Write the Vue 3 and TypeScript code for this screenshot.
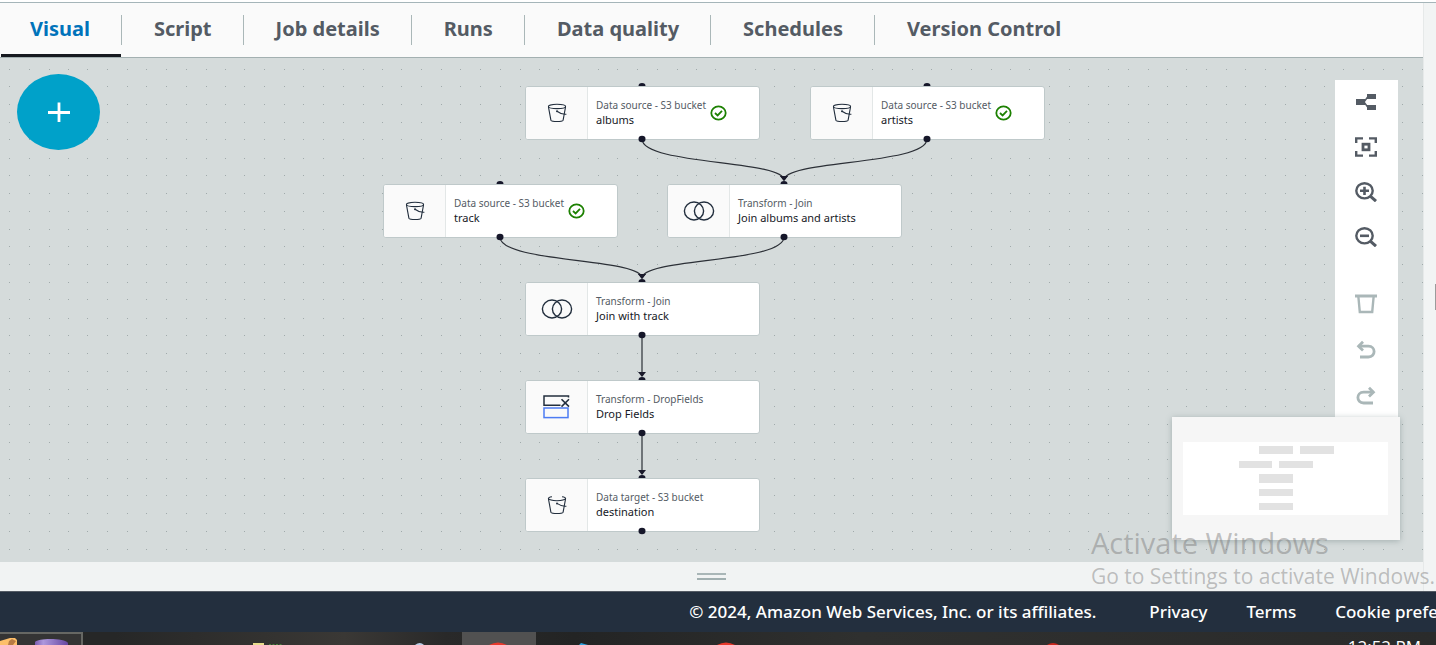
<script setup lang="ts">
import { ref } from 'vue'

type IconName = 'bucket' | 'bucketOpen' | 'join' | 'drop'

interface FlowNode {
  id: string
  kind: string
  name: string
  icon: IconName
  x: number
  y: number
  ok?: boolean
}

const tabs = ['Visual', 'Script', 'Job details', 'Runs', 'Data quality', 'Schedules', 'Version Control']
const active = ref('Visual')

const nodes: FlowNode[] = [
  { id: 'albums', kind: 'Data source - S3 bucket', name: 'albums', icon: 'bucket', x: 525, y: 28, ok: true },
  { id: 'artists', kind: 'Data source - S3 bucket', name: 'artists', icon: 'bucket', x: 810, y: 28, ok: true },
  { id: 'track', kind: 'Data source - S3 bucket', name: 'track', icon: 'bucket', x: 383, y: 126, ok: true },
  { id: 'join1', kind: 'Transform - Join', name: 'Join albums and artists', icon: 'join', x: 667, y: 126 },
  { id: 'join2', kind: 'Transform - Join', name: 'Join with track', icon: 'join', x: 525, y: 224 },
  { id: 'drop', kind: 'Transform - DropFields', name: 'Drop Fields', icon: 'drop', x: 525, y: 322 },
  { id: 'dest', kind: 'Data target - S3 bucket', name: 'destination', icon: 'bucketOpen', x: 525, y: 420 },
]

const links: [string, string][] = [
  ['albums', 'join1'],
  ['artists', 'join1'],
  ['track', 'join2'],
  ['join1', 'join2'],
  ['join2', 'drop'],
  ['drop', 'dest'],
]

const HALF = 117
const CARD_H = 53

const byId = (id: string) => nodes.find((n) => n.id === id)!

const edges = links.map(([from, to]) => {
  const a = byId(from)
  const b = byId(to)
  const x1 = a.x + HALF
  const y1 = a.y + CARD_H
  const x2 = b.x + HALF
  const y2 = b.y - 4
  return {
    key: from + to,
    d: `M${x1} ${y1} C${x1} ${y1 + 26} ${x2} ${y2 - 20} ${x2} ${y2}`,
    head: `${x2 - 4},${y2 - 4} ${x2 + 4},${y2 - 4} ${x2},${y2 + 1}`,
  }
})

const dotXs = [0, 20, 40, 59, 78, 98, 118, 137]
const dotYs = [0, 17, 35, 53, 70, 89, 106, 124, 142]

const blocks = [
  [76, 4, 34, 8],
  [117, 4, 34, 8],
  [56, 19, 33, 7],
  [96, 19, 34, 7],
  [76, 32, 34, 9],
  [76, 47, 34, 7],
  [76, 61, 34, 7],
]
</script>

<template>
  <div class="page">
    <div class="editor">
      <main class="workspace">
        <nav class="tabs" role="tablist">
          <button
            v-for="t in tabs"
            :key="t"
            class="tab"
            :class="{ active: active === t }"
            role="tab"
            :aria-selected="active === t"
            @click="active = t"
          >
            <span>{{ t }}</span>
          </button>
        </nav>

        <section class="canvas">
          <svg class="layer" width="100%" height="100%" aria-hidden="true">
            <defs>
              <pattern id="grid" x="9" y="11" width="157" height="160" patternUnits="userSpaceOnUse">
                <template v-for="y in dotYs" :key="y">
                  <rect v-for="x in dotXs" :key="x" :x="x" :y="y" width="1" height="1" fill="#a0aaab" />
                </template>
              </pattern>
            </defs>
            <rect width="100%" height="100%" fill="url(#grid)" />
            <g v-for="e in edges" :key="e.key">
              <path :d="e.d" fill="none" stroke="#2b2f36" stroke-width="1.2" />
              <polygon :points="e.head" fill="#1a1a2b" />
            </g>
            <ellipse v-for="n in nodes" :key="n.id" :cx="n.x + HALF" :cy="n.y" rx="3.5" ry="3" fill="#16172a" />
          </svg>

          <article
            v-for="n in nodes"
            :key="n.id"
            class="node"
            :style="{ left: n.x + 'px', top: n.y + 'px' }"
          >
            <div class="node-icon">
              <svg v-if="n.icon === 'bucket'" width="20" height="20" viewBox="0 0 20 20">
                <g fill="none" stroke="#232f3e" stroke-width="1.1">
                  <ellipse cx="10" cy="3.4" rx="8.6" ry="2.2" />
                  <path d="M1.4 3.6 L3.9 17.2 C5 19 15 19 16.1 17.2 L18.6 3.6" />
                  <path d="M10 8.2 C13 10.4 17 11.6 19.4 11.2" />
                </g>
                <circle cx="10" cy="8.2" r="1" fill="#232f3e" />
              </svg>
              <svg v-else-if="n.icon === 'bucketOpen'" width="20" height="20" viewBox="0 0 20 20">
                <g fill="none" stroke="#232f3e" stroke-width="1.1">
                  <path d="M5 1.8 C2 2.2 1.2 3 1.4 3.6 C2.8 6.4 17.2 6.4 18.6 3.6 C18.8 3 18 2.2 15 1.8" />
                  <path d="M1.4 3.6 L3.9 17.2 C5 19 15 19 16.1 17.2 L18.6 3.6" />
                  <path d="M10 8.4 C13 10.4 17 11.6 19.4 11.2" />
                </g>
                <circle cx="10" cy="8.4" r="1" fill="#232f3e" />
              </svg>
              <svg v-else-if="n.icon === 'join'" width="32" height="20" viewBox="0 0 32 20">
                <g fill="none" stroke="#232f3e" stroke-width="1.4">
                  <ellipse cx="11" cy="10" rx="9.6" ry="9" />
                  <ellipse cx="21" cy="10" rx="9.6" ry="9" />
                </g>
              </svg>
              <svg v-else width="28" height="24" viewBox="0 0 28 24">
                <path d="M25.5 2.5 V1 H1 V10.2 H17.5" fill="none" stroke="#232f3e" stroke-width="1.5" />
                <path d="M18.5 4.2 L26 11.6 M26 4.2 L18.5 11.6" stroke="#232f3e" stroke-width="1.6" />
                <rect x="1" y="13" width="24" height="9.6" fill="none" stroke="#4d7cf3" stroke-width="1.5" />
              </svg>
            </div>
            <div class="node-text">
              <span class="kind">{{ n.kind }}</span>
              <span class="name">{{ n.name }}</span>
            </div>
            <svg v-if="n.ok" class="ok" width="17" height="16" viewBox="0 0 17 16">
              <ellipse cx="8.5" cy="8" rx="7.2" ry="6.6" fill="none" stroke="#1d8102" stroke-width="1.8" />
              <path d="M5 8 L7.6 10.4 L12 5.8" fill="none" stroke="#1d8102" stroke-width="1.8" />
            </svg>
          </article>

          <svg class="layer over" width="100%" height="100%" aria-hidden="true">
            <ellipse v-for="n in nodes" :key="n.id" :cx="n.x + HALF" :cy="n.y + CARD_H" rx="3.5" ry="3.2" fill="#16172a" />
          </svg>

          <button class="add" aria-label="Add node">
            <svg width="22" height="20" viewBox="0 0 22 20">
              <path d="M0 10.5 H22 M11 0.5 V20" stroke="#fff" stroke-width="2.8" />
            </svg>
          </button>

          <div class="toolbar">
            <div class="group view">
              <button aria-label="Auto layout">
                <svg width="22" height="20" viewBox="0 0 22 20">
                  <g fill="#545b64">
                    <rect x="1" y="7" width="9" height="6" />
                    <rect x="12" y="2" width="9" height="5" />
                    <rect x="12" y="13" width="9" height="5" />
                  </g>
                  <path d="M13 4.5 L9 10 L13 15.5" fill="none" stroke="#545b64" stroke-width="1.4" />
                </svg>
              </button>
              <button aria-label="Fit to screen">
                <svg width="22" height="20" viewBox="0 0 22 20">
                  <g fill="none" stroke="#545b64">
                    <path d="M1.2 6 V1.4 H8 M14 1.4 H20.8 V6 M20.8 14 V18.6 H14 M8 18.6 H1.2 V14" stroke-width="2.4" />
                    <rect x="8" y="7.2" width="6" height="5.6" stroke-width="2.8" />
                  </g>
                </svg>
              </button>
              <button aria-label="Zoom in">
                <svg width="22" height="20" viewBox="0 0 22 20">
                  <g fill="none" stroke="#545b64">
                    <ellipse cx="9.5" cy="8.8" rx="8.2" ry="7.6" stroke-width="2.4" />
                    <path d="M15 13.8 L21 19.2" stroke-width="3" />
                    <path d="M5 8.8 H14 M9.5 4.7 V12.9" stroke-width="2.6" />
                  </g>
                </svg>
              </button>
              <button aria-label="Zoom out">
                <svg width="22" height="20" viewBox="0 0 22 20">
                  <g fill="none" stroke="#545b64">
                    <ellipse cx="9.5" cy="8.8" rx="8.2" ry="7.6" stroke-width="2.4" />
                    <path d="M15 13.8 L21 19.2" stroke-width="3" />
                    <path d="M5 8.8 H14" stroke-width="2.6" />
                  </g>
                </svg>
              </button>
            </div>
            <div class="group edit">
              <button aria-label="Remove" disabled>
                <svg width="22" height="20" viewBox="0 0 22 20">
                  <g fill="none" stroke="#aab7b8">
                    <path d="M0 2 H22" stroke-width="3" />
                    <path d="M3.4 3 L4.8 18 H17.2 L18.6 3" stroke-width="2.4" />
                  </g>
                </svg>
              </button>
              <button aria-label="Undo" disabled>
                <svg width="22" height="20" viewBox="0 0 22 20">
                  <g fill="none" stroke="#aab7b8" stroke-width="2.8">
                    <path d="M3.4 6.2 H13.4 C21 6.2 21 17 13.4 17 H5" />
                    <path d="M8 1.8 L3.6 6.2 L8 10.4" />
                  </g>
                </svg>
              </button>
              <button aria-label="Redo" disabled>
                <svg width="22" height="20" viewBox="0 0 22 20">
                  <g fill="none" stroke="#aab7b8" stroke-width="2.8">
                    <path d="M18.6 6.2 H8.6 C1 6.2 1 17 8.6 17 H18" />
                    <path d="M14 1.8 L18.4 6.2 L14 10.4" />
                  </g>
                </svg>
              </button>
            </div>
          </div>

          <div class="minimap">
            <svg width="205" height="73" viewBox="0 0 205 73">
              <rect width="205" height="73" fill="#fff" />
              <rect
                v-for="(b, i) in blocks"
                :key="i"
                :x="b[0]"
                :y="b[1]"
                :width="b[2]"
                :height="b[3]"
                fill="#e2e2e2"
              />
            </svg>
          </div>
        </section>

        <div class="splitter">
          <button class="grip" aria-label="Resize panel"></button>
        </div>
      </main>
      <aside class="gutter"><span class="thumb"></span></aside>
    </div>

    <footer class="footer">
      <span class="copy">© 2024, Amazon Web Services, Inc. or its affiliates.</span>
      <a href="#">Privacy</a>
      <a href="#">Terms</a>
      <a href="#">Cookie preferences</a>
    </footer>

    <div class="taskbar">
      <svg class="task-icons" width="1100" height="13" viewBox="0 0 1100 13" aria-hidden="true">
        <defs>
          <linearGradient id="violet">
            <stop offset="0" stop-color="#7a5cb0" />
            <stop offset="0.25" stop-color="#ad98dd" />
            <stop offset="1" stop-color="#6646a0" />
          </linearGradient>
        </defs>
        <rect width="83" height="13" fill="#666763" />
        <rect y="2" width="81" height="11" fill="#343434" />
        <path d="M0 9 L10 6 H15 L17 8 V13 H0 Z" fill="#fdbf6a" />
        <path d="M9 9 L12 7 L16 9 L13 13 H8 Z" fill="#b87b45" />
        <path d="M35 13 V10 C38 6 65 6 68 11 V13 Z" fill="url(#violet)" />
        <rect x="253" y="11" width="11" height="2" fill="#e8dc8c" />
        <path d="M269 12.5 H283" stroke="#45803c" stroke-dasharray="2 1.5" />
        <path d="M415 13 Q420 9 424 13 Z" fill="#b9cde6" />
        <rect x="462" width="74" height="13" fill="#515151" />
        <path d="M489 13 Q498 8 507 13 Z" fill="#e8392c" />
        <path d="M579 13 L581 11 L588 13 Z" fill="#2ca3e0" />
        <path d="M717 13 Q726 8 735 13 Z" fill="#e8392c" />
        <path d="M1047 13 Q1053 9 1059 13 Z" fill="#c9281e" />
      </svg>
      <time class="clock">12:52 PM</time>
    </div>

    <div class="watermark">
      <p class="wm-title">Activate Windows</p>
      <p class="wm-body">Go to Settings to activate Windows.</p>
    </div>
  </div>
</template>

<style>
body {
  margin: 0;
}
</style>

<style scoped>
.page {
  position: relative;
  display: flex;
  flex-direction: column;
  height: 100vh;
  overflow: hidden;
  background: #f1f3f3;
  font-family: 'Noto Sans', 'Open Sans', sans-serif;
  color: #16191f;
}
button {
  border: 0;
  padding: 0;
  background: none;
  font: inherit;
  cursor: pointer;
}
.editor {
  flex: 1;
  min-height: 0;
  display: flex;
  margin-top: 2px;
  border-top: 1px solid #a5b5b9;
  border-bottom: 1px solid #545b64;
  box-shadow: 0 -2px 0 #fff;
}
.workspace {
  flex: 1;
  min-width: 0;
  display: flex;
  flex-direction: column;
}
.gutter {
  width: 12px;
  border-left: 1px solid #e6e9e9;
  background: #f2f4f4;
  display: flex;
  justify-content: flex-end;
}
.thumb {
  width: 1px;
  height: 26px;
  margin-top: 281px;
  background: #9b9b9b;
}
.tabs {
  display: flex;
  height: 54px;
  border-bottom: 1px solid #a3b0b1;
  background: #fafafa;
}
.tab {
  display: flex;
  align-items: center;
  position: relative;
  padding: 0 32px;
  font-size: 20px;
  line-height: 28px;
  font-weight: 700;
  color: #545b64;
  white-space: nowrap;
}
.tab span {
  margin-bottom: 2px;
}
.tab:first-child {
  padding-left: 30px;
}
.tab:not(:last-child)::after {
  content: '';
  position: absolute;
  right: 0;
  top: 12px;
  width: 1px;
  height: 30px;
  background: #aab7b8;
}
.tab.active {
  color: #0073bb;
}
.tab.active::before {
  content: '';
  position: absolute;
  left: 1px;
  right: 1px;
  bottom: 0;
  height: 3px;
  background: #16191f;
}
.canvas {
  position: relative;
  flex: 1;
  min-height: 0;
  background: #d5dbdb;
  overflow: hidden;
}
.layer {
  position: absolute;
  inset: 0;
}
.over {
  pointer-events: none;
}
.node {
  position: absolute;
  box-sizing: border-box;
  display: flex;
  align-items: center;
  width: 235px;
  height: 54px;
  border: 1px solid #bfc9ca;
  border-radius: 3px;
  background: #fff;
  overflow: hidden;
}
.node-icon {
  display: flex;
  align-items: center;
  justify-content: center;
  width: 61px;
  height: 100%;
  border-right: 1px solid #e3e7e7;
  background: #fafafa;
}
.node-text {
  display: flex;
  flex-direction: column;
  padding: 0 0 2px 8px;
  white-space: nowrap;
}
.kind {
  font-size: 10px;
  line-height: 14px;
  color: #545b64;
}
.name {
  font-size: 11px;
  line-height: 15px;
  color: #16191f;
}
.ok {
  margin-left: 4px;
}
.add {
  position: absolute;
  left: 17px;
  top: 16px;
  display: flex;
  align-items: center;
  justify-content: center;
  width: 83px;
  height: 76px;
  border-radius: 50%;
  background: #00a1c9;
}
.toolbar {
  position: absolute;
  right: 25px;
  top: 22px;
  width: 63px;
  background: #fff;
}
.group {
  display: flex;
  flex-direction: column;
}
.group button {
  display: flex;
  align-items: center;
  justify-content: center;
  height: 45px;
  padding: 0 2px 1px 0;
}
.edit {
  margin-top: 21px;
}
.group.edit button {
  height: 46px;
}
.minimap {
  position: absolute;
  right: 23px;
  bottom: 22px;
  display: flex;
  align-items: center;
  box-sizing: border-box;
  width: 228px;
  height: 123px;
  padding-left: 11px;
  background: #f6f6f6;
  box-shadow: 0 1px 6px rgba(90, 110, 110, 0.4);
}
.splitter {
  display: flex;
  align-items: center;
  justify-content: center;
  height: 29px;
}
.grip {
  width: 29px;
  height: 7px;
  box-sizing: border-box;
  border-top: 2px solid #a9b6b7;
  border-bottom: 2px solid #a1afb0;
}
.footer {
  display: flex;
  align-items: center;
  gap: 39px;
  height: 40px;
  padding-left: 48%;
  background: #232f3e;
  color: #fff;
  font-size: 17px;
  font-weight: 500;
  line-height: 24px;
  white-space: nowrap;
}
.copy {
  margin-right: 14px;
}
.footer a {
  color: inherit;
  text-decoration: none;
}
.taskbar {
  display: flex;
  justify-content: space-between;
  height: 13px;
  overflow: hidden;
  background: linear-gradient(90deg, #262727 8%, #3a3835 24%, #292929 31%, #232424 40%, #2f302f 60%, #2a2b2b);
}
.clock {
  margin-right: 15px;
  padding-top: 3px;
  font-family: 'Open Sans', sans-serif;
  font-size: 17px;
  line-height: 24px;
  color: #fff;
}
.watermark {
  position: absolute;
  right: 1px;
  bottom: 55px;
  color: rgba(120, 120, 120, 0.45);
  font-family: 'Open Sans', sans-serif;
  white-space: nowrap;
  pointer-events: none;
}
.watermark p {
  margin: 0;
}
.wm-title {
  font-size: 29px;
  line-height: 38px;
}
.wm-body {
  font-size: 21px;
  line-height: 28px;
}
</style>
